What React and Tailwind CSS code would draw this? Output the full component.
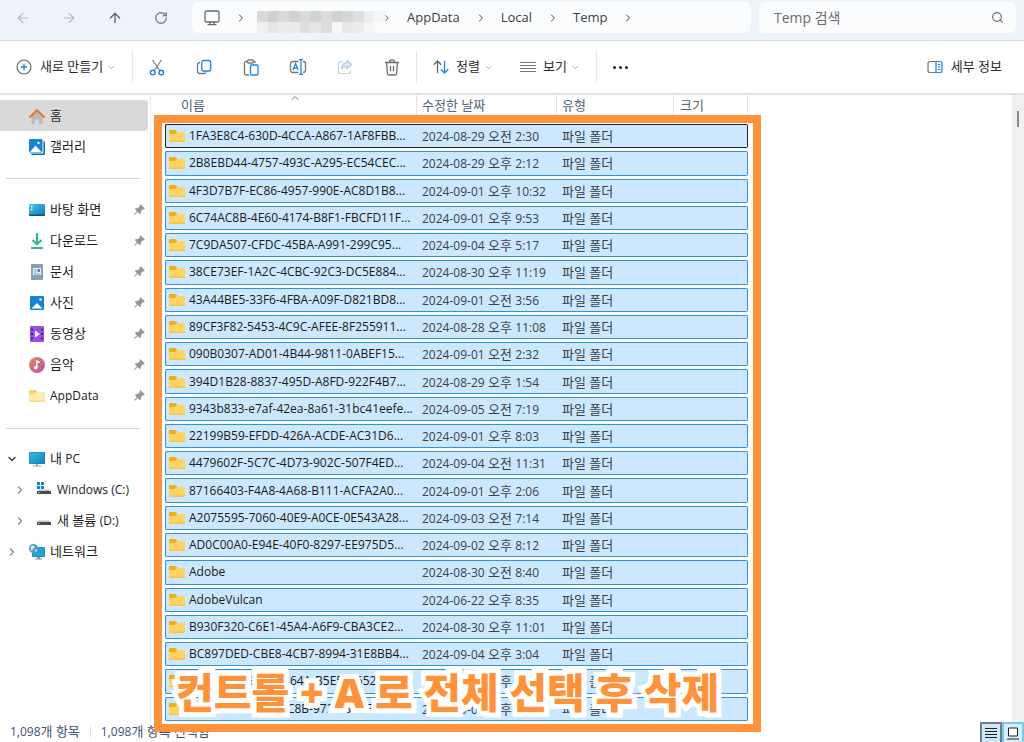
import { useState } from 'react';
import { ArrowLeft, ArrowRight, ArrowUp, ChevronDown, ChevronRight, ChevronUp, RotateCw, Search } from 'lucide-react';

const FOLDERS = [
  { name: '1FA3E8C4-630D-4CCA-A867-1AF8FBB...', day: '2024-08-29', half: '오전', time: '2:30' },
  { name: '2B8EBD44-4757-493C-A295-EC54CEC...', day: '2024-08-29', half: '오후', time: '2:12' },
  { name: '4F3D7B7F-EC86-4957-990E-AC8D1B8...', day: '2024-09-01', half: '오후', time: '10:32' },
  { name: '6C74AC8B-4E60-4174-B8F1-FBCFD11F...', day: '2024-09-01', half: '오후', time: '9:53' },
  { name: '7C9DA507-CFDC-45BA-A991-299C95...', day: '2024-09-04', half: '오후', time: '5:17' },
  { name: '38CE73EF-1A2C-4CBC-92C3-DC5E884...', day: '2024-08-30', half: '오후', time: '11:19' },
  { name: '43A44BE5-33F6-4FBA-A09F-D821BD8...', day: '2024-09-01', half: '오전', time: '3:56' },
  { name: '89CF3F82-5453-4C9C-AFEE-8F255911...', day: '2024-08-28', half: '오후', time: '11:08' },
  { name: '090B0307-AD01-4B44-9811-0ABEF15...', day: '2024-09-01', half: '오전', time: '2:32' },
  { name: '394D1B28-8837-495D-A8FD-922F4B7...', day: '2024-08-29', half: '오후', time: '1:54' },
  { name: '9343b833-e7af-42ea-8a61-31bc41eefe...', day: '2024-09-05', half: '오전', time: '7:19' },
  { name: '22199B59-EFDD-426A-ACDE-AC31D6...', day: '2024-09-01', half: '오후', time: '8:03' },
  { name: '4479602F-5C7C-4D73-902C-507F4ED...', day: '2024-09-04', half: '오전', time: '11:31' },
  { name: '87166403-F4A8-4A68-B111-ACFA2A0...', day: '2024-09-01', half: '오후', time: '2:06' },
  { name: 'A2075595-7060-40E9-A0CE-0E543A28...', day: '2024-09-03', half: '오전', time: '7:14' },
  { name: 'AD0C00A0-E94E-40F0-8297-EE975D5...', day: '2024-09-02', half: '오후', time: '8:12' },
  { name: 'Adobe', day: '2024-08-30', half: '오전', time: '8:40' },
  { name: 'AdobeVulcan', day: '2024-06-22', half: '오후', time: '8:35' },
  { name: 'B930F320-C6E1-45A4-A6F9-CBA3CE2...', day: '2024-08-30', half: '오후', time: '11:01' },
  { name: 'BC897DED-CBE8-4CB7-8994-31E8BB4...', day: '2024-09-04', half: '오후', time: '3:04' },
  { name: 'C2E91A05-B1D7-464A-B5E5-D652D17...', day: '2024-09-01', half: '오후', time: '2:51' },
  { name: 'CEC4762E-6937-4C8B-9725-87BF365E...', day: '2024-09-01', half: '오후', time: '9:53' },
];

const MOSAIC = [
  '#d9d9da', '#d0d0d1', '#d9d9da', '#d1d1d2', '#dadadb', '#d0d4d2', '#dcdcdd', '#d1d3d2', '#d6d8d7', '#dedfe0', '#edeef0', '#f5f6f8',
  '#f0f0f2', '#e6e6e8', '#ececee', '#ebebed', '#dedee0', '#e6e6e8', '#dcdde0', '#f5f7f9', '#e6e8ea', '#ebecee', '#f3f5f7', '#fafbfd',
];

function FolderIcon({ pale }) {
  return (
    <svg width="16" height="16" viewBox="0 0 16 16" className="shrink-0" aria-hidden="true">
      <path d="M0 3a1 1 0 0 1 1-1h5.500l2 2v4H0z" fill={pale ? '#f5d27a' : '#efae1a'} />
      <path d="M0 6h6l2-2h7a1 1 0 0 1 1 1v8a1 1 0 0 1-1 1H1a1 1 0 0 1-1-1z" fill={pale ? '#fde9ae' : '#ffd462'} />
      <path d="M0 12.500V13a1 1 0 0 0 1 1h14a1 1 0 0 0 1-1v-.500z" fill={pale ? '#f8dc93' : '#f8c344'} />
    </svg>
  );
}

function HomeIcon() {
  return (
    <svg width="16" height="16" viewBox="0 0 16 16" aria-hidden="true">
      <path d="M2.500 7.500 8 3l5.500 4.500V15a1 1 0 0 1-1 1H10v-4.500H6V16H3.500a1 1 0 0 1-1-1z" fill="#b9bbbe" />
      <path d="M1 9 8 2.300 15 9" fill="none" stroke="#e9752c" strokeWidth="2" strokeLinecap="round" strokeLinejoin="round" />
    </svg>
  );
}

function GalleryIcon() {
  return (
    <svg width="16" height="16" viewBox="0 0 16 16" aria-hidden="true">
      <rect x="2" y="2" width="14" height="14" rx="1.500" fill="#1c67b4" />
      <rect x="0" y="0" width="14.500" height="14.500" rx="1" fill="#eaf4fc" />
      <rect x="0" y="0" width="13.500" height="13.500" rx="1" fill="#1684d6" />
      <path d="M1 13 6.500 6.500 12.500 13z" fill="#fff" />
      <circle cx="9.500" cy="4" r="1.200" fill="#fff" />
    </svg>
  );
}

function DesktopIcon() {
  return (
    <svg width="16" height="16" viewBox="0 0 16 16" aria-hidden="true">
      <defs>
        <linearGradient id="desk" x1="0" y1="0" x2="1" y2="1">
          <stop offset="0" stopColor="#3fd0e6" />
          <stop offset="1" stopColor="#1270bd" />
        </linearGradient>
      </defs>
      <rect x="0" y="2" width="16" height="12" rx="1" fill="url(#desk)" />
      <path d="M2 4.500h1.500M2 7.500h1.500" stroke="#fff" strokeWidth="1.500" />
      <path d="M0 12.500h16V13a1 1 0 0 1-1 1H1a1 1 0 0 1-1-1z" fill="#0c4f8f" />
    </svg>
  );
}

function DownloadIcon() {
  return (
    <svg width="16" height="16" viewBox="0 0 16 16" fill="none" stroke="#27b48d" strokeWidth="1.900" aria-hidden="true">
      <path d="M8 0v11M3.500 7 8 11.300 12.500 7" />
      <path d="M2 15h12" />
    </svg>
  );
}

function DocumentIcon() {
  return (
    <svg width="16" height="16" viewBox="0 0 16 16" aria-hidden="true">
      <rect x="2" y="0" width="12" height="16" rx="1" fill="#839fbb" />
      <rect x="4" y="4" width="8" height="7" fill="#e9f0f7" />
      <path d="M5 6h2.500M5 8h2.500M5 10h6" stroke="#7f9bb8" />
      <rect x="8.500" y="5" width="2.500" height="3" fill="#5f82a8" />
    </svg>
  );
}

function PictureIcon() {
  return (
    <svg width="16" height="16" viewBox="0 0 16 16" aria-hidden="true">
      <rect x="1" y="1" width="14" height="14" rx="1" fill="#1585d3" />
      <path d="M2.500 13.500 8 8l5.500 5.500z" fill="#fff" />
      <circle cx="11.500" cy="4.500" r="1.200" fill="#fff" />
    </svg>
  );
}

function VideoIcon() {
  return (
    <svg width="16" height="16" viewBox="0 0 16 16" aria-hidden="true">
      <rect x="1" y="0" width="14" height="16" rx="1" fill="#9650e6" />
      <path d="M3 2.500v12M13 2.500v12" stroke="#3d1279" strokeWidth="1.600" strokeDasharray="2 2.500" />
      <path d="M6 4.500 11 8l-5 3.500z" fill="#fff" />
    </svg>
  );
}

function MusicIcon() {
  return (
    <svg width="16" height="16" viewBox="0 0 16 16" aria-hidden="true">
      <defs>
        <linearGradient id="music" x1="0" y1="0" x2="1" y2="1">
          <stop offset="0" stopColor="#ee8455" />
          <stop offset="1" stopColor="#a85ab0" />
        </linearGradient>
      </defs>
      <circle cx="8" cy="8" r="8" fill="url(#music)" />
      <circle cx="6.700" cy="10.700" r="1.800" fill="#fff" />
      <path d="M7.800 11V4l3 1.300" fill="none" stroke="#fff" strokeWidth="1.400" />
    </svg>
  );
}

function ComputerIcon() {
  return (
    <svg width="16" height="16" viewBox="0 0 16 16" aria-hidden="true">
      <defs>
        <linearGradient id="screen" x1="0" y1="0" x2="1" y2="1">
          <stop offset="0" stopColor="#2fc0df" />
          <stop offset="1" stopColor="#1a80c0" />
        </linearGradient>
      </defs>
      <rect x="0" y="1" width="16" height="12" rx="1" fill="#167ab5" />
      <rect x="0.500" y="1.500" width="15" height="11" fill="url(#screen)" />
      <path d="M7 13h2v1.500h3v1H4v-1h3z" fill="#9aa8b3" />
    </svg>
  );
}

function DriveIcon({ system }) {
  return (
    <svg width="16" height="16" viewBox="0 0 16 16" aria-hidden="true">
      {system && <path d="M1 0h3v3H1zM5 0h3v3H5zM1 4h3v3H1zM5 4h3v3H5z" fill="#0e84d8" />}
      <path d="M3 7.500h10l2 2H1z" fill="#c4c4c4" />
      <rect x="1" y="9" width="14" height="3" rx="0.500" fill="#4a4a4a" />
      <rect x="2" y="10" width="2" height="1" fill="#53d06b" />
    </svg>
  );
}

function NetworkIcon() {
  return (
    <svg width="16" height="16" viewBox="0 0 16 16" aria-hidden="true">
      <rect x="3" y="3" width="13" height="10" rx="1" fill="#167ab5" />
      <rect x="3.500" y="3.500" width="12" height="9" fill="#29a0d2" />
      <path d="M8 13h3v1.500h2v1H6v-1h2z" fill="#8d9aa5" />
      <circle cx="4.500" cy="4.500" r="4.500" fill="#4f9cc4" />
      <path d="M1.500 2.500 4 1l2 2-2 2-1.500 2.500zM6 6l2-1v2L6.500 8z" fill="#cde7f1" />
    </svg>
  );
}

function PinIcon() {
  return (
    <svg width="11" height="11" viewBox="0 0 11 11" className="mr-[5px] ml-auto" aria-hidden="true">
      <path d="M6.500 0.500 10.500 4.500 9.300 5.200 8.800 4.900 6.800 7 6.600 9.300 5.700 9.800 3.700 7.700 0.800 10.500 0.400 10.200 3.200 7.200 1.300 5.200 1.800 4.300 4.100 4.200 6.200 2.200 5.900 1.600z" fill="#8d979f" stroke="#8d979f" strokeWidth="0.600" />
    </svg>
  );
}

function MonitorIcon() {
  return (
    <svg width="16" height="16" viewBox="0 0 16 16" fill="none" stroke="#6a6a6a" strokeWidth="1.300" aria-hidden="true">
      <rect x="1" y="1" width="14" height="11" rx="1.500" />
      <path d="M6 12v2.500M10 12v2.500M3.500 14.700h9" />
    </svg>
  );
}

function NewIcon() {
  return (
    <svg width="16" height="16" viewBox="0 0 16 16" fill="none" aria-hidden="true">
      <circle cx="8" cy="8" r="7" stroke="#5f6368" strokeWidth="1.200" />
      <path d="M8 4.800v6.400M4.800 8h6.400" stroke="#1a88e0" strokeWidth="1.400" />
    </svg>
  );
}

function CutIcon() {
  return (
    <svg width="16" height="17" viewBox="0 0 16 17" fill="none" strokeWidth="1.200" aria-hidden="true">
      <path d="M3.500 1 11 12M12.500 1 5 12" stroke="#777" />
      <circle cx="3.700" cy="13.500" r="2.300" stroke="#1a88e0" strokeWidth="1.500" />
      <circle cx="12.300" cy="13.500" r="2.300" stroke="#1a88e0" strokeWidth="1.500" />
    </svg>
  );
}

function CopyIcon() {
  return (
    <svg width="16" height="16" viewBox="0 0 16 16" fill="none" strokeWidth="1.300" aria-hidden="true">
      <path d="M4 3.500A2.500 2.500 0 0 0 1.500 6v6A2.500 2.500 0 0 0 4 14.500h4a2 2 0 0 0 2-1" stroke="#777" />
      <rect x="5.700" y="1.500" width="9" height="10.500" rx="2" stroke="#1a88e0" />
    </svg>
  );
}

function PasteIcon() {
  return (
    <svg width="16" height="17" viewBox="0 0 16 17" fill="none" strokeWidth="1.300" aria-hidden="true">
      <path d="M4.500 2.500H3A1.500 1.500 0 0 0 1.500 4v10.500A1.500 1.500 0 0 0 3 16h3M10.500 2.500h.500A1.500 1.500 0 0 1 12.500 4" stroke="#777" />
      <rect x="4.500" y="1" width="6" height="3" rx="1" stroke="#777" />
      <rect x="7.500" y="6" width="7.500" height="10" rx="1" stroke="#1a88e0" />
    </svg>
  );
}

function RenameIcon() {
  return (
    <svg width="18" height="16" viewBox="0 0 18 16" fill="none" strokeWidth="1.300" aria-hidden="true">
      <path d="M9.500 2.500H4A2.500 2.500 0 0 0 1.500 5v6A2.500 2.500 0 0 0 4 13.500h5.500M14 2.500A2.500 2.500 0 0 1 16.500 5v6a2.500 2.500 0 0 1-2.500 2.500" stroke="#777" />
      <path d="M12 .7v14.600M10 .7h4M10 15.300h4M4 11l2.500-6.500L9 11M4.800 9h3.400" stroke="#1a88e0" />
    </svg>
  );
}

function ShareIcon() {
  return (
    <svg width="16" height="16" viewBox="0 0 16 16" fill="none" strokeWidth="1.200" aria-hidden="true">
      <path d="M6 2.500H3.500a2 2 0 0 0-2 2v8a2 2 0 0 0 2 2h8a2 2 0 0 0 2-2v-1" stroke="#cfcfcf" />
      <path d="M10 1.500 14.500 5.500 10 9.500V7.300C7 7.200 5.500 8.200 4.300 10 4.500 6.500 6.500 4 10 3.800z" stroke="#a9cdee" fill="#e3f0fb" strokeLinejoin="round" />
    </svg>
  );
}

function TrashIcon() {
  return (
    <svg width="16" height="17" viewBox="0 0 16 17" fill="none" stroke="#6c6c6c" strokeWidth="1.300" aria-hidden="true">
      <path d="M1 3.500h14M5.500 3.300a2.500 2.500 0 0 1 5 0M2.500 3.500l1 11A1.500 1.500 0 0 0 5 16h6a1.500 1.500 0 0 0 1.500-1.500l1-11M6.500 7v5.500M9.500 7v5.500" />
    </svg>
  );
}

function SortIcon() {
  return (
    <svg width="16" height="14" viewBox="0 0 16 14" fill="none" strokeWidth="1.300" aria-hidden="true">
      <path d="M4.500 13V1M.8 4.700 4.500 1l3.700 3.700" stroke="#666" />
      <path d="M11.500 1v12M7.800 9.300 11.500 13l3.700-3.700" stroke="#1a88e0" />
    </svg>
  );
}

function LinesIcon() {
  return (
    <svg width="16" height="12" viewBox="0 0 16 12" stroke="#777" aria-hidden="true">
      <path d="M0 1.500h16M0 4.500h16M0 7.500h16M0 10.500h16" />
    </svg>
  );
}

function DetailsPaneIcon() {
  return (
    <svg width="16" height="14" viewBox="0 0 16 14" fill="none" strokeWidth="1.200" aria-hidden="true">
      <path d="M9 1.500H3a2 2 0 0 0-2 2v7a2 2 0 0 0 2 2h6" stroke="#777" />
      <path d="M9 1.500h4a2 2 0 0 1 2 2v7a2 2 0 0 1-2 2H9zM11 4.500h2.500M11 7h2.500M11 9.500h2.500" stroke="#1a88e0" />
    </svg>
  );
}

const PLACES = [
  { label: '바탕 화면', icon: <DesktopIcon /> },
  { label: '다운로드', icon: <DownloadIcon /> },
  { label: '문서', icon: <DocumentIcon /> },
  { label: '사진', icon: <PictureIcon /> },
  { label: '동영상', icon: <VideoIcon /> },
  { label: '음악', icon: <MusicIcon /> },
  { label: 'AppData', icon: <FolderIcon pale />, latin: true },
];

const FILE_ACTIONS = [
  { label: '잘라내기', icon: <CutIcon /> },
  { label: '복사', icon: <CopyIcon /> },
  { label: '붙여넣기', icon: <PasteIcon /> },
  { label: '이름 바꾸기', icon: <RenameIcon /> },
  { label: '공유', icon: <ShareIcon />, disabled: true },
  { label: '삭제', icon: <TrashIcon /> },
];

function AddressBar() {
  const [query, setQuery] = useState('');

  return (
    <header className="flex h-[41px] shrink-0 items-start border-b border-[#cfd9e4] bg-[#eef3f9] pt-[2px] pr-2">
      <div className="flex h-[31px] w-[192px] shrink-0">
        <button aria-label="뒤로" className="flex w-[46px] items-center justify-center text-[#b3b6ba]"><ArrowLeft size={16} strokeWidth={1.7} /></button>
        <button aria-label="앞으로" className="flex w-[46px] items-center justify-center text-[#b3b6ba]"><ArrowRight size={16} strokeWidth={1.7} /></button>
        <button aria-label="위로" className="flex w-[46px] items-center justify-center text-[#55585c]"><ArrowUp size={16} strokeWidth={1.8} /></button>
        <button aria-label="새로 고침" className="flex w-[46px] items-center justify-center text-[#7c7f83]"><RotateCw size={14} strokeWidth={2.3} /></button>
      </div>

      <nav aria-label="경로" className="flex h-[31px] flex-1 items-center rounded-md bg-[#fbfcfe] pl-3 text-[13px] text-[#3c3c3c]">
        <MonitorIcon />
        <ChevronRight size={12} className="ml-[15px] shrink-0" />
        <div className="mt-2 ml-[10px] grid w-[128px] shrink-0 grid-cols-12" aria-hidden="true">
          {MOSAIC.map((color, i) => (
            <div key={i} className="h-[11px]" style={{ backgroundColor: color }} />
          ))}
        </div>
        <ChevronRight size={10} className="-ml-[3px] shrink-0" />
        <a href="#appdata" className="ml-[15px]">AppData</a>
        <ChevronRight size={12} className="ml-[15px] shrink-0" />
        <a href="#local" className="ml-[14px]">Local</a>
        <ChevronRight size={12} className="ml-[15px] shrink-0" />
        <a href="#temp" className="ml-[14px]">Temp</a>
        <ChevronRight size={12} className="ml-[15px] shrink-0" />
      </nav>

      <label className="ml-2 flex h-[31px] w-[257px] items-center rounded-md bg-[#fbfcfe] pr-3 pl-[15px]">
        <input
          type="search"
          aria-label="Temp 검색"
          placeholder="Temp 검색"
          value={query}
          onChange={(e) => setQuery(e.target.value)}
          className="min-w-0 flex-1 bg-transparent text-sm outline-none placeholder:text-[#6b6b6b]"
        />
        <Search size={13} className="text-[#666]" />
      </label>
    </header>
  );
}

function Toolbar() {
  return (
    <div role="toolbar" className="flex h-[54px] shrink-0 items-center border-b-2 border-[#dde4ec] bg-white text-[13px] text-[#2b2b2b]">
      <button className="flex w-[132px] items-center pl-4">
        <NewIcon />
        <span className="ml-2">새로 만들기</span>
        <ChevronDown size={9} className="ml-1 text-[#888]" />
      </button>
      <div className="h-8 w-px bg-[#e8e8e8]" />
      {FILE_ACTIONS.map((action) => (
        <button key={action.label} aria-label={action.label} disabled={action.disabled} className="flex h-8 w-[47px] items-center justify-center">
          {action.icon}
        </button>
      ))}
      <div className="ml-px h-8 w-px bg-[#e8e8e8]" />
      <button className="ml-4 flex items-center">
        <SortIcon />
        <span className="ml-[7px]">정렬</span>
        <ChevronDown size={9} className="ml-1 text-[#888]" />
      </button>
      <button className="ml-[27px] flex items-center">
        <LinesIcon />
        <span className="ml-[7px]">보기</span>
        <ChevronDown size={9} className="ml-1 text-[#888]" />
      </button>
      <div className="ml-4 h-8 w-px bg-[#e8e8e8]" />
      <button aria-label="자세히" className="flex h-8 w-[47px] items-center justify-center gap-[3px]">
        <span className="size-[3px] rounded-full bg-[#222]" />
        <span className="size-[3px] rounded-full bg-[#222]" />
        <span className="size-[3px] rounded-full bg-[#222]" />
      </button>
      <button className="mr-[22px] ml-auto flex items-center gap-2">
        <DetailsPaneIcon />
        세부 정보
      </button>
    </div>
  );
}

function Sidebar() {
  return (
    <nav aria-label="탐색 창" className="w-[151px] shrink-0 border-r border-[#ececec] pt-[5px] text-[13px] text-[#1c1c1c]">
      <a href="#home" className="mr-[2px] flex h-[31px] items-center gap-[5px] rounded-r bg-[#d9d9d9] pl-[29px]">
        <HomeIcon />
        홈
      </a>
      <a href="#gallery" className="flex h-[31px] items-center gap-[5px] pl-[29px]">
        <GalleryIcon />
        갤러리
      </a>

      <hr className="mt-4 mr-[10px] mb-[15px] ml-[6px] border-[#d6d6d6]" />

      {PLACES.map((place) => (
        <a key={place.label} href="#place" className="flex h-[31px] items-center gap-[5px] pl-[29px]">
          {place.icon}
          <span className={place.latin ? 'text-xs' : ''}>{place.label}</span>
          <PinIcon />
        </a>
      ))}

      <hr className="mt-[17px] mr-[10px] mb-[14px] ml-[6px] border-[#d6d6d6]" />

      <a href="#pc" className="flex h-[31px] items-center gap-[5px] pl-[6px]">
        <ChevronDown size={12} strokeWidth={3} className="mr-[6px] text-[#444]" />
        <ComputerIcon />
        <span>내 <span className="text-xs">PC</span></span>
      </a>
      <a href="#c" className="flex h-[31px] items-center gap-[5px] pl-[14px]">
        <ChevronRight size={12} strokeWidth={2.5} className="mr-[5px] text-[#888]" />
        <DriveIcon system />
        <span className="text-xs">Windows (C:)</span>
      </a>
      <a href="#d" className="flex h-[31px] items-center gap-[5px] pl-[14px]">
        <ChevronRight size={12} strokeWidth={2.5} className="mr-[5px] text-[#888]" />
        <DriveIcon />
        <span>새 볼륨 <span className="text-xs">(D:)</span></span>
      </a>
      <a href="#network" className="flex h-[31px] items-center gap-[5px] pl-[6px]">
        <ChevronRight size={12} strokeWidth={2.5} className="mr-[6px] text-[#888]" />
        <NetworkIcon />
        네트워크
      </a>
    </nav>
  );
}

function FileTable() {
  return (
    <table className="-mt-[3px] h-[calc(100%+5px)] w-full table-fixed border-separate border-spacing-x-0 border-spacing-y-[3px] text-left text-[13px] leading-5 whitespace-nowrap">
      <thead className="text-[#53657f]">
        <tr className="h-[26px] align-top">
          <th className="relative w-[252px] border-r border-[#e3e3e3] pl-4 font-normal">
            이름
            <ChevronUp size={12} className="absolute -top-[3px] left-[124px] text-[#777]" />
          </th>
          <th className="w-[140px] border-r border-[#e3e3e3] pl-[5px] font-normal">수정한 날짜</th>
          <th className="w-[117px] border-r border-[#e3e3e3] pl-[5px] font-normal">유형</th>
          <th className="border-r border-[#e3e3e3] pl-[6px] font-normal">크기</th>
        </tr>
      </thead>
      <tbody>
        {FOLDERS.map((folder, i) => {
          const edge = i === 0 ? 'border-[#20252b]' : 'border-[#3191e0]';
          return (
            <tr key={folder.name} className="text-[#3a4048]">
              <td className={`rounded-l-xs border-y border-l bg-[#cce8ff] pl-[3px] ${edge}`}>
                <div className="flex items-center gap-1 text-xs text-[#1a1a1a]">
                  <FolderIcon />
                  {folder.name}
                </div>
              </td>
              <td className={`border-y bg-[#cce8ff] pl-[5px] ${edge}`}>
                <span className="text-xs">{folder.day}</span> {folder.half} <span className="text-xs">{folder.time}</span>
              </td>
              <td className={`border-y bg-[#cce8ff] pl-[5px] ${edge}`}>파일 폴더</td>
              <td className={`rounded-r-xs border-y border-r bg-[#cce8ff] ${edge}`} />
            </tr>
          );
        })}
      </tbody>
    </table>
  );
}

function StatusBar() {
  return (
    <footer className="flex h-5 shrink-0 items-center bg-white pl-[10px] text-[13px] text-[#3f5472]">
      <span><span className="text-xs">1,098</span>개 항목</span>
      <div className="mx-[10px] h-3 w-px bg-[#e3e3e3]" />
      <span><span className="text-xs">1,098</span>개 항목 선택함</span>
      <div className="ml-auto flex h-5">
        <button aria-label="자세히 보기" className="flex w-[22px] items-center justify-center border-2 border-b-0 border-[#6d7f8c] bg-[#cfe8f8]">
          <svg width="12" height="12" viewBox="0 0 12 12" stroke="#222" aria-hidden="true">
            <path d="M0 1.500h12M0 4.500h12M0 7.500h12M0 10.500h12" />
          </svg>
        </button>
        <button aria-label="큰 아이콘 보기" className="flex w-[22px] items-center justify-center border-2 border-b-0 border-[#7cc8ee] bg-[#d9eefa]">
          <svg width="12" height="13" viewBox="0 0 12 13" fill="#fff" stroke="#222" aria-hidden="true">
            <path d="M1.500 1h9v8h-9zM0 12h12" />
          </svg>
        </button>
      </div>
    </footer>
  );
}

export default function App() {
  return (
    <div className="flex h-screen flex-col overflow-hidden bg-white font-['Open_Sans','Noto_Sans_CJK_KR',sans-serif]">
      <AddressBar />
      <Toolbar />

      <div className="flex min-h-0 flex-1">
        <Sidebar />
        <main className="relative ml-[14px] w-[583px] shrink-0">
          <FileTable />

          {/* Highlight frame and caption drawn over the list */}
          <div className="pointer-events-none absolute top-5 -right-[13px] -bottom-[10px] -left-[11px] z-10 flex items-end border-8 border-[#ff933b] pb-2 pl-[14px]">
            <p className="text-[41px] leading-[48px] font-black whitespace-nowrap text-[#ff933b] [-webkit-text-stroke:10px_white] [paint-order:stroke_fill]">
              컨트롤 + A 로 전체 선택 후 삭제
            </p>
          </div>
        </main>
        <div className="ml-auto flex w-3 justify-center bg-[#f0f0f0] pt-4">
          <div className="h-4 w-[2px] bg-[#8a8a8a]" />
        </div>
      </div>

      <StatusBar />
    </div>
  );
}
